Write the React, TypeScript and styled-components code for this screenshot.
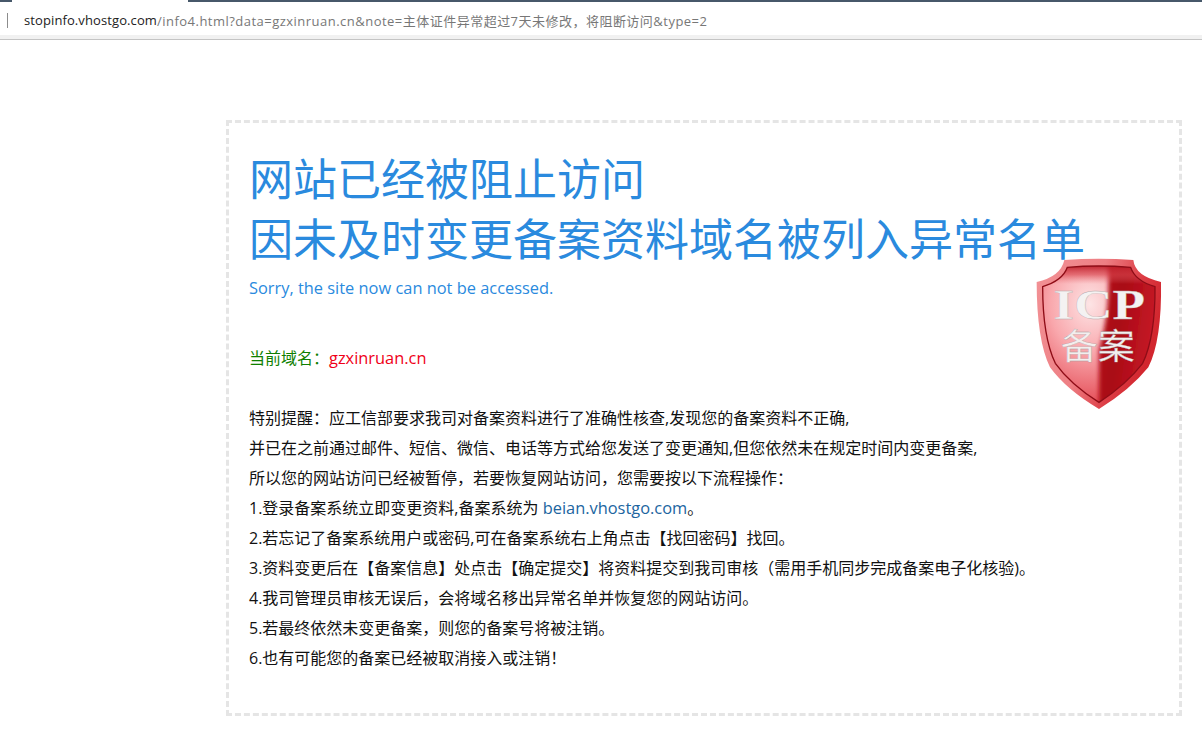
import React from "react";
import styled, { createGlobalStyle } from "styled-components";

const GlobalStyle = createGlobalStyle`
  html, body {
    margin: 0;
    padding: 0;
    background: #fff;
  }
  body {
    font-family: "Open Sans", "Noto Sans CJK SC", sans-serif;
    overflow: hidden;
  }
`;

const Page = styled.div`
  width: 1202px;
  height: 738px;
  display: flex;
  flex-direction: column;
  background: #fff;
`;

const TabStrip = styled.div`
  height: 2px;
  display: flex;
  background: #47586a;
`;

const ActiveTab = styled.div`
  width: 176px;
  margin-left: 12px;
  background: #fff;
`;

const AddressBar = styled.div`
  box-sizing: border-box;
  height: 33px;
  padding: 3px 0 0 7px;
  display: flex;
  align-items: center;
  background: #fff;
  font-size: 13px;
  white-space: nowrap;
`;

const Caret = styled.span`
  width: 1px;
  height: 15px;
  margin-right: 16px;
  background: #8c8c8c;
`;

const Host = styled.span`
  color: #222;
  letter-spacing: 0.1px;
`;

const UrlRest = styled.span`
  color: #777;
  letter-spacing: 0.48px;
`;

const BarShadow = styled.div`
  height: 4px;
  background: #f1f1f1;
  border-bottom: 1px solid #c4c4c4;
`;

const Card = styled.main`
  position: relative;
  box-sizing: border-box;
  width: 956px;
  height: 596px;
  margin: 80px 0 0 226px;
  padding: 26px 20px 0;
  border: 3px dashed #e5e5e5;
`;

const Heading = styled.h1`
  margin: 0;
  font-size: 44px;
  font-weight: 400;
  line-height: 60px;
  color: #2a8ade;
  white-space: nowrap;
`;

const Subtitle = styled.p`
  margin: 6px 0 0;
  font-size: 16.4px;
  line-height: 26px;
  color: #2a8ade;
`;

const DomainRow = styled.p`
  margin: 44px 0 0;
  font-size: 16px;
  line-height: 26px;
  color: #0f7f00;
`;

const DomainName = styled.span`
  font-size: 16.4px;
  color: #f00018;
`;

const Notice = styled.div`
  margin-top: 32px;
  font-size: 16px;
  line-height: 30px;
  color: #111;
  white-space: nowrap;
`;

const NoticeLine = styled.div``;

const RecordLink = styled.a`
  font-size: 16.4px;
  color: #21659f;
  text-decoration: none;
`;

const Badge = styled.svg`
  position: absolute;
  top: 117px;
  right: -1px;
  width: 160px;
  height: 180px;
`;

const SHIELD =
  "M133 60 Q235 52 340 60 Q345 108 423 126 Q426 300 385 382 Q330 450 237 507 Q140 450 90 382 Q50 300 50 126 Q122 110 133 60 Z";
const SHIELD_INNER =
  "M142 82 Q235 74 332 82 Q345 122 405 140 Q406 290 368 370 Q320 432 237 487 Q150 432 106 370 Q68 290 68 140 Q128 122 142 82 Z";
const RIGHT_HALF =
  "M262 60 L420 60 L420 500 L237 500 L237 330 Q275 200 262 60 Z";

function IcpBadge() {
  return (
    <Badge viewBox="0 0 480 540" aria-label="ICP 备案">
      <defs>
        <linearGradient id="rim" x1="0" y1="0" x2="1" y2="0.35">
          <stop offset="0" stopColor="#f29296" />
          <stop offset="0.5" stopColor="#ee7f84" />
          <stop offset="0.8" stopColor="#dc3c44" />
          <stop offset="1" stopColor="#d2262e" />
        </linearGradient>
        <radialGradient id="face" cx="0.42" cy="0.28" r="0.78">
          <stop offset="0" stopColor="#fde4e5" />
          <stop offset="0.45" stopColor="#f9a8ad" />
          <stop offset="1" stopColor="#e2434d" />
        </radialGradient>
        <linearGradient id="dark" x1="0" y1="0" x2="1" y2="0.3">
          <stop offset="0" stopColor="#bb1420" />
          <stop offset="0.4" stopColor="#a80614" />
          <stop offset="1" stopColor="#c81c28" />
        </linearGradient>
        <linearGradient id="topShade" x1="0" y1="0" x2="0" y2="1">
          <stop offset="0" stopColor="#b3101c" />
          <stop offset="0.55" stopColor="#d8434c" stopOpacity="0.65" />
          <stop offset="1" stopColor="#e8747a" stopOpacity="0" />
        </linearGradient>
        <clipPath id="innerClip">
          <path d={SHIELD_INNER} />
        </clipPath>
        <filter id="soft" x="-20%" y="-20%" width="140%" height="140%">
          <feGaussianBlur stdDeviation="7" />
        </filter>
      </defs>
      <path d={SHIELD} fill="url(#rim)" />
      <path d={SHIELD_INNER} fill="url(#face)" />
      <g clipPath="url(#innerClip)">
        <path d={RIGHT_HALF} fill="url(#dark)" filter="url(#soft)" />
        <rect x="60" y="70" width="360" height="62" fill="url(#topShade)" />
      </g>
      <path d={SHIELD_INNER} fill="none" stroke="#8e0c16" strokeWidth="4" />
      <text
        x="100"
        y="236"
        fontFamily="'Liberation Serif', serif"
        fontWeight="700"
        fontSize="128"
        textLength="275"
        lengthAdjust="spacingAndGlyphs"
        fill="#f4f2f2"
        stroke="#b9a9aa"
        strokeWidth="1"
      >
        ICP
      </text>
      <text
        x="122"
        y="358"
        fontFamily="'Noto Sans CJK SC', sans-serif"
        fontSize="106"
        textLength="222"
        lengthAdjust="spacingAndGlyphs"
        fill="#f3eeee"
        stroke="#a89a9b"
        strokeWidth="1"
      >
        备案
      </text>
    </Badge>
  );
}

const LINES = [
  "特别提醒：应工信部要求我司对备案资料进行了准确性核查,发现您的备案资料不正确,",
  "并已在之前通过邮件、短信、微信、电话等方式给您发送了变更通知,但您依然未在规定时间内变更备案,",
  "所以您的网站访问已经被暂停，若要恢复网站访问，您需要按以下流程操作：",
];

const STEPS = [
  "2.若忘记了备案系统用户或密码,可在备案系统右上角点击【找回密码】找回。",
  "3.资料变更后在【备案信息】处点击【确定提交】将资料提交到我司审核（需用手机同步完成备案电子化核验)。",
  "4.我司管理员审核无误后，会将域名移出异常名单并恢复您的网站访问。",
  "5.若最终依然未变更备案，则您的备案号将被注销。",
  "6.也有可能您的备案已经被取消接入或注销！",
];

export default function App() {
  return (
    <Page>
      <GlobalStyle />
      <TabStrip>
        <ActiveTab />
      </TabStrip>
      <AddressBar>
        <Caret />
        <Host>stopinfo.vhostgo.com</Host>
        <UrlRest>/info4.html?data=gzxinruan.cn&amp;note=主体证件异常超过7天未修改，将阻断访问&amp;type=2</UrlRest>
      </AddressBar>
      <BarShadow />
      <Card>
        <Heading>
          网站已经被阻止访问
          <br />
          因未及时变更备案资料域名被列入异常名单
        </Heading>
        <Subtitle>Sorry, the site now can not be accessed.</Subtitle>
        <DomainRow>
          当前域名：<DomainName>gzxinruan.cn</DomainName>
        </DomainRow>
        <Notice>
          {LINES.map((line) => (
            <NoticeLine key={line}>{line}</NoticeLine>
          ))}
          <NoticeLine>
            1.登录备案系统立即变更资料,备案系统为 <RecordLink href="#">beian.vhostgo.com</RecordLink>。
          </NoticeLine>
          {STEPS.map((line) => (
            <NoticeLine key={line}>{line}</NoticeLine>
          ))}
        </Notice>
        <IcpBadge />
      </Card>
    </Page>
  );
}
